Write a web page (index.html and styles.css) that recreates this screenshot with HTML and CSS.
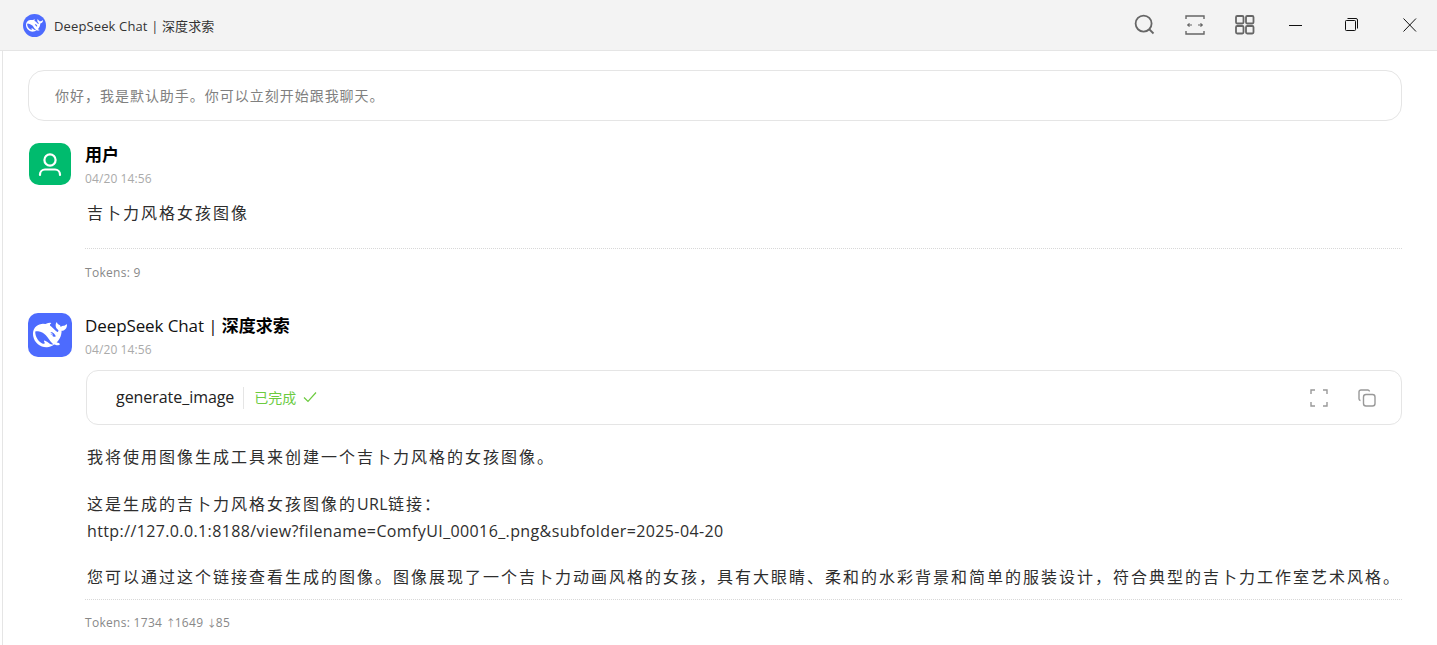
FILE: index.html
```html
<!DOCTYPE html>
<html lang="zh-CN">
<head>
<meta charset="utf-8">
<title>DeepSeek Chat</title>
<link rel="stylesheet" href="styles.css">
</head>
<body>
<div class="app">
  <header class="titlebar">
    <div class="brand">
      <span class="brand-logo">
        <svg viewBox="0 0 24 24" width="17" height="17"><path class="whale" d="M23.748 4.482c-.254-.124-.364.113-.512.234-.051.039-.094.09-.137.136-.372.397-.806.657-1.373.626-.829-.046-1.537.214-2.163.848-.133-.782-.575-1.248-1.247-1.548-.352-.156-.708-.311-.955-.65-.172-.241-.219-.51-.305-.774-.055-.16-.11-.323-.293-.35-.2-.031-.278.136-.356.276-.313.572-.434 1.202-.422 1.84.027 1.436.633 2.58 1.838 3.393.137.093.172.187.129.323-.082.28-.18.552-.266.833-.055.179-.137.217-.329.14a5.526 5.526 0 01-1.736-1.18c-.857-.828-1.631-1.742-2.597-2.458a11.365 11.365 0 00-.689-.471c-.985-.957.13-1.743.388-1.836.27-.098.093-.432-.779-.428-.872.004-1.67.295-2.687.684a3.055 3.055 0 01-.465.137 9.597 9.597 0 00-2.883-.102c-1.885.21-3.39 1.102-4.497 2.623C.082 8.606-.231 10.684.152 12.85c.403 2.284 1.569 4.175 3.36 5.653 1.858 1.533 3.997 2.284 6.438 2.14 1.482-.085 3.133-.284 4.994-1.86.47.234.962.327 1.78.397.63.059 1.236-.03 1.705-.128.735-.156.684-.837.419-.961-2.155-1.004-1.682-.595-2.113-.926 1.096-1.296 2.746-2.642 3.392-7.003.05-.347.007-.565 0-.845-.004-.17.035-.237.23-.256a4.173 4.173 0 001.545-.475c1.396-.763 1.96-2.015 2.093-3.517.02-.23-.004-.467-.247-.588zM11.581 18c-2.089-1.642-3.102-2.183-3.52-2.16-.392.024-.321.471-.235.763.09.288.207.486.371.739.114.167.192.416-.113.603-.673.416-1.842-.14-1.897-.167-1.361-.802-2.5-1.86-3.301-3.307-.774-1.393-1.224-2.887-1.298-4.482-.02-.386.093-.522.477-.592a4.696 4.696 0 011.529-.039c2.132.312 3.946 1.265 5.468 2.774.868.86 1.525 1.887 2.202 2.891.72 1.066 1.494 2.082 2.48 2.914.348.292.625.514.891.677-.802.09-2.14.11-3.054-.614zm1-6.44a.306.306 0 01.415-.287.302.302 0 01.2.288.306.306 0 01-.31.307.303.303 0 01-.304-.308zm3.11 1.596c-.2.081-.399.151-.59.16a1.245 1.245 0 01-.798-.254c-.274-.23-.47-.358-.552-.758a1.73 1.73 0 01.016-.588c.07-.327-.008-.537-.239-.727-.187-.156-.426-.199-.688-.199a.559.559 0 01-.254-.078c-.11-.054-.2-.19-.114-.358.028-.054.16-.186.192-.21.356-.202.767-.136 1.146.016.352.144.618.408 1.001.782.391.451.462.576.685.914.176.265.336.537.445.848.067.195-.019.354-.25.452z"/></svg>
      </span>
      <span class="brand-name">DeepSeek Chat | 深度求索</span>
    </div>
    <div class="tools">
      <svg class="tool-icon" viewBox="0 0 22 22" width="22" height="22"><circle cx="9.600" cy="9.600" r="8"/><path d="M15.500 15.500l4 4"/></svg>
      <svg class="tool-icon" viewBox="0 0 22 22" width="22" height="22"><path class="edge" d="M2 5V2h18v3M2 17v3h18v-3"/><path class="thin" d="M3 11h5M5.500 9.300L3.800 11l1.700 1.700M14 11h5M16.500 9.300l1.700 1.700-1.700 1.700"/></svg>
      <svg class="tool-icon" viewBox="0 0 22 22" width="22" height="22"><rect x="2" y="2" width="7.500" height="7.500" rx="1.200"/><rect x="12" y="2" width="7.500" height="7.500" rx="1.200"/><rect x="2" y="12" width="7.500" height="7.500" rx="1.200"/><rect x="12" y="12" width="7.500" height="7.500" rx="1.200"/></svg>
    </div>
    <div class="win-controls">
      <svg class="win-icon" viewBox="0 0 14 14" width="14" height="14"><path d="M0 7.500h13"/></svg>
      <svg class="win-icon" viewBox="1 0 14 14" width="14" height="14"><rect x=".5" y="2.500" width="10" height="10" rx=".8"/><path d="M2.500.5h8.500a1.500 1.500 0 011.500 1.500v8.500"/></svg>
      <svg class="win-icon" viewBox="0 0 14 14" width="14" height="14"><path d="M.5.5l12.500 13M13 .5L.5 13.500"/></svg>
    </div>
  </header>

  <main class="chat">
    <div class="welcome">你好，我是默认助手。你可以立刻开始跟我聊天。</div>

    <section class="message user">
      <div class="avatar-col">
        <span class="avatar avatar-user">
          <svg viewBox="0 0 26 26" width="26" height="26"><circle cx="13" cy="9" r="5.600"/><path d="M3 24v-.5a5 5 0 015-5h10a5 5 0 015 5v.5"/></svg>
        </span>
      </div>
      <div class="msg-body">
        <div class="msg-name"><b>用户</b></div>
        <div class="msg-time">04/20 14:56</div>
        <div class="msg-text"><p>吉卜力风格女孩图像</p></div>
        <div class="msg-foot">Tokens: 9</div>
      </div>
    </section>

    <section class="message bot">
      <div class="avatar-col">
        <span class="avatar avatar-bot">
          <svg viewBox="0 0 24 24" width="34" height="34"><path class="whale" d="M23.748 4.482c-.254-.124-.364.113-.512.234-.051.039-.094.09-.137.136-.372.397-.806.657-1.373.626-.829-.046-1.537.214-2.163.848-.133-.782-.575-1.248-1.247-1.548-.352-.156-.708-.311-.955-.65-.172-.241-.219-.51-.305-.774-.055-.16-.11-.323-.293-.35-.2-.031-.278.136-.356.276-.313.572-.434 1.202-.422 1.84.027 1.436.633 2.58 1.838 3.393.137.093.172.187.129.323-.082.28-.18.552-.266.833-.055.179-.137.217-.329.14a5.526 5.526 0 01-1.736-1.18c-.857-.828-1.631-1.742-2.597-2.458a11.365 11.365 0 00-.689-.471c-.985-.957.13-1.743.388-1.836.27-.098.093-.432-.779-.428-.872.004-1.67.295-2.687.684a3.055 3.055 0 01-.465.137 9.597 9.597 0 00-2.883-.102c-1.885.21-3.39 1.102-4.497 2.623C.082 8.606-.231 10.684.152 12.85c.403 2.284 1.569 4.175 3.36 5.653 1.858 1.533 3.997 2.284 6.438 2.14 1.482-.085 3.133-.284 4.994-1.86.47.234.962.327 1.78.397.63.059 1.236-.03 1.705-.128.735-.156.684-.837.419-.961-2.155-1.004-1.682-.595-2.113-.926 1.096-1.296 2.746-2.642 3.392-7.003.05-.347.007-.565 0-.845-.004-.17.035-.237.23-.256a4.173 4.173 0 001.545-.475c1.396-.763 1.96-2.015 2.093-3.517.02-.23-.004-.467-.247-.588zM11.581 18c-2.089-1.642-3.102-2.183-3.52-2.16-.392.024-.321.471-.235.763.09.288.207.486.371.739.114.167.192.416-.113.603-.673.416-1.842-.14-1.897-.167-1.361-.802-2.5-1.86-3.301-3.307-.774-1.393-1.224-2.887-1.298-4.482-.02-.386.093-.522.477-.592a4.696 4.696 0 011.529-.039c2.132.312 3.946 1.265 5.468 2.774.868.86 1.525 1.887 2.202 2.891.72 1.066 1.494 2.082 2.48 2.914.348.292.625.514.891.677-.802.09-2.14.11-3.054-.614zm1-6.44a.306.306 0 01.415-.287.302.302 0 01.2.288.306.306 0 01-.31.307.303.303 0 01-.304-.308zm3.11 1.596c-.2.081-.399.151-.59.16a1.245 1.245 0 01-.798-.254c-.274-.23-.47-.358-.552-.758a1.73 1.73 0 01.016-.588c.07-.327-.008-.537-.239-.727-.187-.156-.426-.199-.688-.199a.559.559 0 01-.254-.078c-.11-.054-.2-.19-.114-.358.028-.054.16-.186.192-.21.356-.202.767-.136 1.146.016.352.144.618.408 1.001.782.391.451.462.576.685.914.176.265.336.537.445.848.067.195-.019.354-.25.452z"/></svg>
        </span>
      </div>
      <div class="msg-body">
        <div class="msg-name">DeepSeek Chat | <b>深度求索</b></div>
        <div class="msg-time">04/20 14:56</div>
        <div class="tool-card">
          <span class="tool-name">generate_image</span>
          <span class="tool-status">已完成
            <svg viewBox="0 0 14 14" width="14" height="14"><path d="M1 7.500l4 4L13 2.500"/></svg>
          </span>
          <span class="tool-actions">
            <svg viewBox="0 0 18 18" width="18" height="18"><path d="M1 5V1h4M13 1h4v4M17 13v4h-4M5 17H1v-4"/></svg>
            <svg viewBox="0 0 18 18" width="18" height="18"><rect x="5.500" y="5.500" width="11.500" height="11.500" rx="2.500"/><path d="M2.500 11.500A1.700 1.700 0 011 10V3a2 2 0 012-2h7a1.700 1.700 0 011.500 1.500"/></svg>
          </span>
        </div>
        <div class="msg-text answer">
          <p>我将使用图像生成工具来创建一个吉卜力风格的女孩图像。</p>
          <p>这是生成的吉卜力风格女孩图像的<span class="url">URL</span>链接：<br><span class="url">http://127.0.0.1:8188/view?filename=ComfyUI_00016_.png&amp;subfolder=2025-04-20</span></p>
          <p>您可以通过这个链接查看生成的图像。图像展现了一个吉卜力动画风格的女孩，具有大眼睛、柔和的水彩背景和简单的服装设计，符合典型的吉卜力工作室艺术风格。</p>
        </div>
        <div class="msg-foot">Tokens: 1734 <span class="arrow">↑</span>1649 <span class="arrow">↓</span>85</div>
      </div>
    </section>
  </main>
</div>
</body>
</html>
```
FILE: styles.css
```css
* { box-sizing: border-box; }
html, body { margin: 0; height: 100%; overflow: hidden; background: #fff; }
body {
  font-family: "Open Sans", "Noto Sans CJK SC", sans-serif;
  color: #1f1f1f;
}
.app { display: flex; flex-direction: column; height: 645px; }

.titlebar {
  flex: none;
  height: 51px;
  display: flex;
  align-items: center;
  background: #f3f3f3;
  border-bottom: 1px solid #e5e5e5;
  padding-left: 23px;
}
.brand { display: flex; align-items: center; gap: 8px; flex: 1; }
.brand-logo {
  width: 23px; height: 23px; border-radius: 50%;
  background: #4d6bfe;
  display: flex; align-items: center; justify-content: center;
}
.whale { fill: #fff; }
.brand-name { font-size: 13px; letter-spacing: .13px; color: #333; }
.tools { display: flex; align-items: center; gap: 28px; margin-right: 33px; }
.tool-icon { fill: none; stroke: #666; stroke-width: 1.8; }
.tool-icon .thin { stroke-width: 1.2; }
.tool-icon .edge { stroke-width: 1.4; }
.win-controls { display: flex; align-items: center; gap: 43px; margin-right: 20px; }
.win-icon { fill: none; stroke: #111; stroke-width: 1; overflow: visible; }

.chat {
  flex: 1;
  margin-left: 2px;
  border-left: 1px solid #e5e5e5;
  padding: 19px 35px 0 25px;
  overflow: hidden;
}
.welcome {
  height: 51px;
  display: flex;
  align-items: center;
  padding: 0 0 2px 26px;
  border: 1px solid #e5e5e5;
  border-radius: 16px;
  font-size: 14px;
  letter-spacing: .98px;
  color: #808080;
}

.message { display: flex; }
.message.user { margin-top: 22px; }
.message.bot { margin-top: 31px; }
.avatar-col { flex: none; width: 57px; }
.avatar { display: flex; align-items: center; justify-content: center; }
.avatar-user {
  width: 42px; height: 42px; margin-left: 1px;
  background: #00bb6e; border-radius: 10px;
}
.avatar-user svg { fill: none; stroke: #fff; stroke-width: 2.2; stroke-linecap: round; }
.avatar-bot {
  width: 44px; height: 44px;
  background: #4d6bfe; border-radius: 10px;
}
.msg-body { flex: 1; min-width: 0; }
.msg-name { font-size: 17px; line-height: 24px; font-weight: 500; letter-spacing: -.1px; color: #111; }
.bot .msg-name { padding-top: 1px; }
.msg-name b { font-weight: 700; letter-spacing: 0; color: #000; }
.msg-time { font-size: 12px; line-height: 18px; letter-spacing: .1px; color: #aaa; padding-top: 3px; height: 21px; }
.msg-text { margin-left: 2px; font-size: 16px; line-height: 27px; letter-spacing: 2px; color: #2e2e2e; }
.msg-text p { margin: 0; }
.user .msg-text { margin-top: 12px; }
.msg-foot {
  border-top: 1px dotted #d8d8d8;
  padding-top: 15px;
  font-size: 12px;
  line-height: 18px;
  letter-spacing: .3px;
  color: #888;
}
.arrow { font-size: 10px; letter-spacing: -1px; }
.user .msg-foot { margin-top: 21px; }
.answer { margin-top: 19px; }
.answer p + p { margin-top: 20px; }
.answer p:last-child { margin-top: 19px; }
.url { letter-spacing: .385px; }
.bot .msg-foot { margin-top: 8px; padding-top: 14px; }

.tool-card {
  margin: 11px 0 0 1px;
  height: 55px;
  display: flex;
  align-items: center;
  padding-left: 29px;
  border: 1px solid #e5e5e5;
  border-radius: 12px;
}
.tool-name {
  font-size: 16px;
  font-weight: 500;
  color: #222;
  padding: 0 9px 2px 0;
  border-right: 1px solid #e5e5e5;
  line-height: 20px;
  letter-spacing: -.05px;
}
.tool-status {
  display: inline-flex; align-items: center; gap: 7px;
  margin-left: 10px;
  padding-bottom: 2px;
  font-size: 14px;
  color: #6ccb3f;
}
.tool-status svg { fill: none; stroke: #6ccb3f; stroke-width: 1.2; }
.tool-actions { display: flex; gap: 30px; margin-left: auto; margin-right: 25px; }
.tool-actions svg { fill: none; stroke: #999; stroke-width: 1.4; }
```
